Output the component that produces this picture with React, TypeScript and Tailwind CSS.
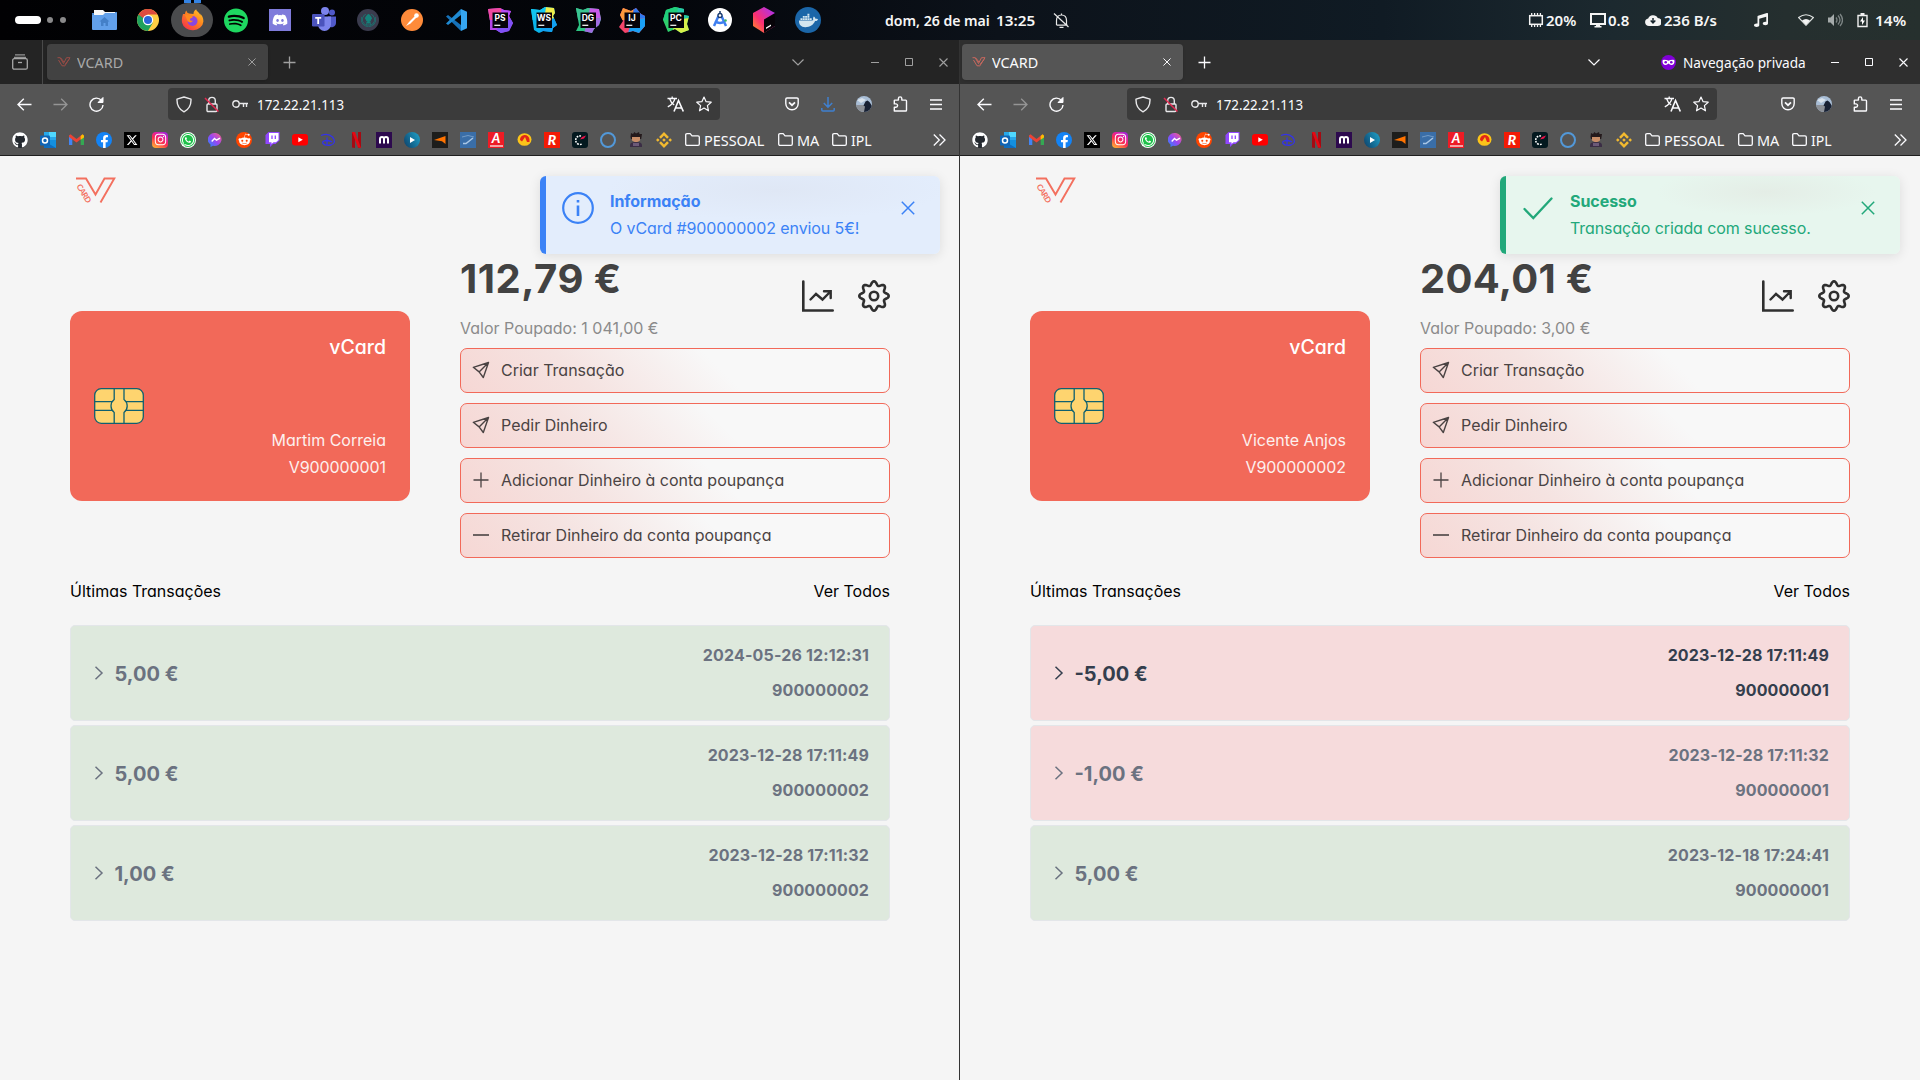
import React from 'react';
import {
  FaSpotify, FaDiscord, FaDocker, FaGithub, FaFacebookF, FaWhatsapp,
  FaRedditAlien, FaInstagram, FaMusic,
} from 'react-icons/fa';
import { FaXTwitter } from 'react-icons/fa6';
import { SiBinance, SiGitkraken } from 'react-icons/si';

type Kids = { children?: React.ReactNode };

/* ---------- system bar ---------- */

function Jb({ label, shape, a, b, c, d }: { label: string; shape: string; a: string; b: string; c: string; d: string }) {
  return (
    <div className="relative h-[26px] w-[26px]">
      <svg className="absolute inset-0" width="26" height="26" viewBox="0 0 26 26">
        <defs><clipPath id={`jb-${label}`}><path d={shape} /></clipPath></defs>
        <g clipPath={`url(#jb-${label})`}>
          <path d="M0 0h26v26H0z" fill={d} />
          <path d="M0 0h15l-2 13H0z" fill={a} />
          <path d="M15 0h11v11L13 13z" fill={b} />
          <path d="M26 11v15H9l4-13z" fill={c} />
        </g>
        <rect x="5.500" y="5.500" width="15.500" height="15.500" fill="#05030a" />
        <rect x="7.300" y="17.700" width="6" height="1.200" fill="#fff" />
      </svg>
      <span className="absolute left-[5px] top-[6px] w-4 text-center font-['Inter'] text-[8.500px] font-bold leading-[11px] text-white">{label}</span>
    </div>
  );
}

function Chrome() {
  return (
    <svg width="22" height="22" viewBox="0 0 22 22">
      <circle cx="11" cy="11" r="11" fill="#ffce44" />
      <path d="M1.500 5.500A11 11 0 0 0 11 22L15.800 13.700 11 11z" fill="#1fa15d" />
      <path d="M1.500 5.500 6.300 13.700 11 11z" fill="#1fa15d" />
      <path d="M1.500 5.500A11 11 0 0 1 20.500 5.500H11L6 9z" fill="#dd4b3e" />
      <circle cx="11" cy="11" r="5.200" fill="#fff" />
      <circle cx="11" cy="11" r="4" fill="#2a66d9" />
    </svg>
  );
}

function Firefox() {
  return (
    <svg width="23" height="23" viewBox="0 0 23 23">
      <defs>
        <linearGradient id="ffx" x1="1" y1="0" x2="0.2" y2="1">
          <stop offset="0" stopColor="#ffd02e" /><stop offset=".45" stopColor="#ff8a1e" /><stop offset="1" stopColor="#f5304b" />
        </linearGradient>
      </defs>
      <path d="M2 5C1 8 .6 11 1 13.500a10.800 9.500 0 0 0 21.400-1C22.500 9 21 6 19 4.500c.5 1 .6 2 .6 2C18 3 15.500 2.500 15.200.3c-2 1.200-2.800 3-2.700 4.700L8 4.500C6.500 4 5.500 3 5.500 1.500 4 3 4 4.500 4 5z" fill="url(#ffx)" />
      <circle cx="11.500" cy="12" r="5" fill="#8a46e0" />
      <path d="M4 6c3-1 5 .5 8 1.500 0 1.500-3 1.300-3 3 0 1 1.500 1.700 3 1-1 2.500-4 2.500-5.500.5z" fill="#ff8a1e" />
    </svg>
  );
}

function Teams() {
  return (
    <svg width="26" height="26" viewBox="0 0 26 26">
      <circle cx="21" cy="5.500" r="3" fill="#5059c9" />
      <circle cx="14" cy="4" r="4" fill="#7b83eb" />
      <path d="M17 9.500h8v6a4.500 4.500 0 0 1-8 3z" fill="#5059c9" />
      <path d="M7 9.500h13v8a6.500 6.500 0 0 1-13 0z" fill="#7b83eb" />
      <rect x="1" y="7" width="12.500" height="12.500" rx="1.200" fill="#4b53bc" />
      <path d="M4.200 10h6v1.700H8.100v5.300H6.300v-5.300H4.200z" fill="#fff" />
    </svg>
  );
}

function VsCode() {
  return (
    <svg width="22" height="22" viewBox="0 0 22 22">
      <path d="M1 7.600 3 6 16 16v6z" fill="#1671b8" />
      <path d="M16 0v6L3 16 1 14.400z" fill="#1f8ad2" />
      <path d="M16 0 22 2.700V19.300L16 22z" fill="#35a5f0" />
    </svg>
  );
}

function Dock({ children, active }: Kids & { active?: boolean }) {
  return (
    <div className="flex h-10 w-11 items-center justify-center">
      {active ? (
        <div className="relative flex h-[34px] w-[42px] items-center justify-center rounded-full bg-[#4a4b4d]">
          <div className="absolute -top-[3px] flex gap-[3px]">
            <i className="h-[3px] w-[7px] bg-[#3584e4]" /><i className="h-[3px] w-[7px] bg-[#3584e4]" />
          </div>
          {children}
        </div>
      ) : children}
    </div>
  );
}

function Ui({ children, w, s = 'scale-x-[0.92]', c = '' }: Kids & { w: string; s?: string; c?: string }) {
  return (
    <span className={`flex shrink-0 whitespace-nowrap ${w} ${c}`}>
      <span className={`inline-block origin-left ${s}`}>{children}</span>
    </span>
  );
}

function SystemBar() {
  return (
    <header className="flex h-10 w-full items-center bg-[linear-gradient(90deg,#010103_0%,#04060b_35%,#0c121a_52%,#101b24_72%,#1c292f_84%,#252f2f_93%,#26302e_100%)] font-['Noto_Sans'] text-[15px] font-semibold leading-5 text-[#f6f6f6]">
      <div className="flex w-[82px] items-center pl-[15px]">
        <i className="h-2 w-[26px] rounded-full bg-white" />
        <i className="ml-1.5 h-1.5 w-1.5 rounded-full bg-[#8a8a8b]" />
        <i className="ml-[7px] h-1.5 w-1.5 rounded-full bg-[#8a8a8b]" />
      </div>
      <Dock>
        <svg width="25" height="20" viewBox="0 0 25 20">
          <path d="M0 3h12l2-1h11v6H0z" fill="#4a88d0" />
          <path d="M2 0h9l2 2h10v6H2z" fill="#f8f8f8" />
          <path d="M0 5h11l2-2h12v16a1 1 0 0 1-1 1H1a1 1 0 0 1-1-1z" fill="#62a0ea" />
          <path d="m12.500 7 5 4.500h-1.500V16h-2.500v-3h-2v3H9v-4.500H7.500z" fill="#4480c8" />
        </svg>
      </Dock>
      <Dock><Chrome /></Dock>
      <Dock active><Firefox /></Dock>
      <Dock>
        <div className="flex h-6 w-6 items-center justify-center rounded-full bg-black"><FaSpotify size={25} color="#1ed760" /></div>
      </Dock>
      <Dock>
        <div className="flex h-[22px] w-[22px] items-center justify-center bg-[#7f7bdb]"><FaDiscord size={16} color="#fff" /></div>
      </Dock>
      <Dock><Teams /></Dock>
      <Dock>
        <div className="flex h-[22px] w-[22px] items-center justify-center rounded-full bg-[#3a3b4d]"><SiGitkraken size={15} color="#14827a" /></div>
      </Dock>
      <Dock>
        <svg width="22" height="22" viewBox="0 0 22 22">
          <circle cx="11" cy="11" r="11" fill="#ff8b3a" />
          <path d="m5 17 3-4 6.500-6.500 1.500 1.500L9.500 14.500z" fill="#fff" />
          <circle cx="15.500" cy="6.500" r="2.300" fill="#fff" />
        </svg>
      </Dock>
      <Dock><VsCode /></Dock>
      <Dock><Jb label="PS" shape="M1 2 13 1 17 3 24 4 22 9 26 16 22 24 14 26 9 23 3 23 3 14z" a="#f04aa0" b="#b74af7" c="#7f52f5" d="#b545e8" /></Dock>
      <Dock><Jb label="WS" shape="M0 2 9 3 14 0 23 1 24 6 22 9 26 18 22 21 21 25 12 24 8 26 3 23z" a="#12c6f0" b="#f0ee4a" c="#12a0f0" d="#0ab4ea" /></Dock>
      <Dock><Jb label="DG" shape="M1 1 8 3 13 1 24 2 26 12 24 18 19 22 17 26 8 24 1 24 4 18z" a="#3ac492" b="#c95aea" c="#a06ce0" d="#2cc482" /></Dock>
      <Dock><Jb label="IJ" shape="M4 1 12 4 17 1 22 7 26 9 26 19 20 26 14 24 6 26 0 20 4 14 1 8z" a="#fa9a3c" b="#2f7af0" c="#1aa0f5" d="#f5446a" /></Dock>
      <Dock><Jb label="PC" shape="M3 3 12 0 21 2 21 8 26 9 24 17 26 23 18 26 12 22 5 25 0 13z" a="#20cf7c" b="#25c8a8" c="#d8f04a" d="#2fcf6c" /></Dock>
      <Dock>
        <svg width="24" height="24" viewBox="0 0 24 24">
          <circle cx="12" cy="12" r="12" fill="#fff" />
          <path d="M6 18 11 7h2l5 11M7 13q5 4 10 0" fill="none" stroke="#3f7ff0" strokeWidth="2.500" />
          <circle cx="12" cy="7.500" r="2" fill="#fff" stroke="#1b3a6b" strokeWidth="1.300" />
          <path d="M12 3v2.500" stroke="#1b3a6b" strokeWidth="1.500" /><circle cx="17.500" cy="12.500" r="1.300" fill="#38b764" />
        </svg>
      </Dock>
      <Dock>
        <svg width="24" height="26" viewBox="0 0 24 26">
          <defs><linearGradient id="tbx" x1="0" y1="1" x2="1" y2="0"><stop offset="0" stopColor="#ff9a1f" /><stop offset=".4" stopColor="#fb2f72" /><stop offset="1" stopColor="#a033ff" /></linearGradient></defs>
          <path d="M12 0 23 6v13L12 26 1 19V6z" fill="url(#tbx)" />
          <path d="M23 6 12 12.500V26l11-7z" fill="#060308" />
          <path d="m14 20.500 5-3v1.500l-5 3z" fill="#fff" />
        </svg>
      </Dock>
      <Dock>
        <div className="flex h-[26px] w-[26px] items-center justify-center rounded-full bg-[#1b66a8]"><FaDocker size={19} color="#d3e6f0" /></div>
      </Dock>
      <div className="ml-[55px] flex items-center">
        <Ui w="w-[79px]" s="scale-x-[0.94]">dom, 26 de</Ui>
        <Ui w="w-[32px]" s="scale-x-[0.94]">mai</Ui>
        <Ui w="w-[57px]" s="scale-x-[1.02]">13:25</Ui>
      </div>
      <svg width="17" height="17" viewBox="0 0 17 17" fill="none" stroke="#e8e8e8" strokeWidth="1.200">
        <path d="M3.500 13.200h11M3.500 13V8.500q0-5.500 5-5.500t5 5.500V13M6.500 15.300h4M8.500 1.500V3M1 1.500l14.500 13.500" />
      </svg>
      <div className="ml-auto flex h-10 items-center pr-3">
        <svg width="16" height="16" viewBox="0 0 16 16" fill="none" stroke="#f4f4f4" strokeWidth="1.500">
          <rect x="1.700" y="3.700" width="12.600" height="8.600" /><path d="M3.700 1v2.500M6.600 1v2.500M9.500 1v2.500M12.400 1v2.500M3.700 12.500V15M6.600 12.500V15M9.500 12.500V15M12.400 12.500V15" strokeWidth="1.300" />
        </svg>
        <Ui w="w-[33px]" s="scale-x-[1]" c="ml-[2px]">20%</Ui>
        <svg className="ml-[11px]" width="16" height="15" viewBox="0 0 16 15"><path d="M1 1h14v10H1z" fill="none" stroke="#f4f4f4" strokeWidth="2" /><path d="M6 11h4v2h1.500v1.500h-7V13H6z" fill="#f4f4f4" /></svg>
        <Ui w="w-[21px]" s="scale-x-[1]" c="ml-[2px]">0.8</Ui>
        <svg className="ml-[16px]" width="16" height="12" viewBox="0 0 16 12"><path d="M4 12a4 3.800 0 0 1-.8-7.500A5 4.500 0 0 1 12.700 4 4 4 0 0 1 12.500 12z" fill="#f4f4f4" /><path d="M8 4v4M5.700 6.500 8 9l2.300-2.500" stroke="#18262e" strokeWidth="1.500" fill="none" /></svg>
        <Ui w="w-[53px]" s="scale-x-[1]" c="ml-[3px]">236 B/s</Ui>
        <FaMusic className="ml-[37px]" size={14} />
        <svg className="ml-[30px]" width="16" height="12" viewBox="0 0 16 12"><path d="M.6 3.500Q8-2 15.400 3.500L8 11.300z" fill="none" stroke="#e0e4e3" strokeWidth="1.100" /><path d="M4 6.500Q8 3.500 12 6.500L8 11z" fill="#f4f4f4" /></svg>
        <svg className="ml-[14px]" width="15" height="14" viewBox="0 0 15 14"><path d="M0 4.500h2.500L6 1v12L2.500 9.500H0z" fill="#a5abab" /><path d="M8 4.500q2 2.500 0 5M10 2.500q4 4.500 0 9M12 1q5 6 0 12" fill="none" stroke="#7d8585" strokeWidth="1.300" /></svg>
        <svg className="ml-[14px]" width="11" height="15" viewBox="0 0 11 15"><path d="M1 2.500h9v11H1z" fill="none" stroke="#f0f0f0" strokeWidth="1.400" /><path d="M3.500 0h4v2h-4z" fill="#f0f0f0" /><path d="M6 4 3 8.500h2V12l3-4.500H6z" fill="#fff" /></svg>
        <Ui w="w-[33px]" s="scale-x-[1.03]" c="ml-[7px]">14%</Ui>
      </div>
    </header>
  );
}

/* ---------- browser chrome ---------- */

const VMark = ({ c }: { c: string }) => (
  <svg width="14" height="10" viewBox="0 0 14 10" fill="none" stroke={c} strokeWidth="1"><path d="M.5.7h2.700l3.300 5.800L9.500.7h3.500L7.500 9.300M1.500 3 5 8.800h2.500M3.500.7 7 5M12 2.500 8 7.500" /></svg>
);

const Cross = ({ c, n = 9 }: { c: string; n?: number }) => (
  <svg width={n} height={n} viewBox="0 0 9 9" stroke={c} strokeWidth="1.100"><path d="M.5.500l8 8M8.500.500l-8 8" /></svg>
);

function WindowButtons({ c, pad }: { c: string; pad: string }) {
  return (
    <div className={`flex items-center ${pad}`}>
      <svg width="8" height="8" viewBox="0 0 8 8"><path d="M0 4.500h8" stroke={c} /></svg>
      <svg className="ml-[26px]" width="8" height="8" viewBox="0 0 8 8"><path d="M.5.500h7v7h-7z" fill="none" stroke={c} /></svg>
      <span className="ml-[26px]"><Cross c={c} /></span>
    </div>
  );
}

function TabStrip({ priv }: { priv?: boolean }) {
  const c = priv ? '#fbfbfe' : '#a0a0a0';
  return (
    <div className={priv ? 'flex h-11 items-center bg-[#2f2f2f] pl-[2px]' : 'flex h-11 items-center bg-[#242424]'}>
      {!priv && (
        <div className="mr-1 flex h-11 w-[43px] items-center border-r border-[#4a4a4a] pl-3">
          <svg width="16" height="16" viewBox="0 0 16 16" fill="none" stroke="#a8a8a8" strokeWidth="1.300"><path d="M3 .8h10M2 3.300h12" opacity=".85" /><rect x=".7" y="4.700" width="14.600" height="10.500" rx="1.500" /><path d="M6 8.500h4" /></svg>
        </div>
      )}
      <div className={priv
        ? 'flex h-9 w-[221px] items-center rounded-[4px] bg-[#555555] pl-[10px] pr-[12px] text-[#fbfbfe] shadow'
        : 'flex h-9 w-[221px] items-center rounded-[4px] bg-[#424242] pl-[10px] pr-[12px] text-[#a9a9a9] shadow'}>
        <VMark c={priv ? '#c9685e' : '#9a4c46'} />
        <Ui w="w-[60px]" s="scale-x-[0.98]" c="ml-[6px]">VCARD</Ui>
        <span className="ml-auto"><Cross c={c} n={8} /></span>
      </div>
      <svg className="ml-[15px]" width="13" height="13" viewBox="0 0 13 13" stroke={c} strokeWidth="1.300"><path d="M6.500.5v12M.5 6.500h12" /></svg>
      <svg className={priv ? 'ml-auto mr-[61px]' : 'ml-auto mr-[67px]'} width="12" height="7" viewBox="0 0 12 7" fill="none" stroke={c} strokeWidth="1.200"><path d="m.5.500 5.500 5.500L11.500.5" /></svg>
      {priv && (
        <>
          <svg width="15" height="15" viewBox="0 0 15 15"><circle cx="7.500" cy="7.500" r="7.500" fill="#8000d7" /><path d="M1.500 6q0-1.300 1.500-1.300 3 0 4.500 1 1.500-1 4.500-1 1.500 0 1.500 1.300 0 4-3.200 4-1.500 0-2.800-1.400Q6.200 10 4.700 10 1.500 10 1.500 6z" fill="#fff" /><circle cx="4.700" cy="7.300" r="1.300" fill="#8000d7" /><circle cx="10.300" cy="7.300" r="1.300" fill="#8000d7" /></svg>
          <Ui w="w-[148px]" s="scale-x-[0.93]" c="ml-[7px] text-[#fbfbfe]">Navegação privada</Ui>
        </>
      )}
      <WindowButtons c={c} pad={priv ? 'pr-[12px]' : 'pr-[11px]'} />
    </div>
  );
}

function Slot({ w, children }: Kids & { w: string }) {
  return <div className={`flex h-10 shrink-0 items-center justify-center ${w}`}>{children}</div>;
}

function Toolbar({ priv }: { priv?: boolean }) {
  const f = '#fbfbfe';
  return (
    <div className={priv ? 'flex h-10 items-center pl-[6px] pr-[6px]' : 'flex h-10 items-center pl-[6px] pr-[5px]'}>
      <Slot w="w-9"><svg width="15" height="13" viewBox="0 0 15 13" fill="none" stroke={f} strokeWidth="1.400"><path d="M14.500 6.500H1M6.800.8 1 6.500l5.800 5.700" /></svg></Slot>
      <Slot w="w-9"><svg width="15" height="13" viewBox="0 0 15 13" fill="none" stroke="#959595" strokeWidth="1.300"><path d="M.5 6.500H14M8.200.8 14 6.500l-5.800 5.700" /></svg></Slot>
      <Slot w="w-9"><svg width="15" height="15" viewBox="0 0 15 15" fill="none" stroke={f} strokeWidth="1.400"><path d="M12.500 3.500A6.500 6.500 0 1 0 14 8" /><path d="M9 5.500h5V.5z" fill={f} strokeWidth="1" /></svg></Slot>
      <div className={priv
        ? 'ml-[53px] mr-[53px] flex h-8 flex-1 items-center rounded-[4px] bg-[#3b3b3b] px-2'
        : 'ml-[54px] mr-[54px] flex h-8 flex-1 items-center rounded-[4px] bg-[#3b3b3b] px-2'}>
        <svg width="16" height="17" viewBox="0 0 16 17" fill="none" stroke="#e8e8ea" strokeWidth="1.400"><path d="M8 1 15 3.200q.3 8.800-7 12.600Q.7 12 1 3.200z" strokeLinejoin="round" /></svg>
        <svg className="ml-3" width="16" height="17" viewBox="0 0 16 17" fill="none" stroke="#e8e8ea" strokeWidth="1.400"><rect x="3" y="8" width="10" height="7.500" rx="1" /><path d="M4.700 8V4.700a3.300 3.300 0 0 1 6.600 0V8" /><path d="m1 2 13.500 13.500" stroke="#e22850" strokeWidth="1.500" /></svg>
        <svg className="ml-3" width="16" height="10" viewBox="0 0 16 10" fill="none" stroke="#e8e8ea" strokeWidth="1.400"><circle cx="4" cy="5" r="3.200" /><path d="M7.200 4.500H16M11.500 4.500V8M14.500 4.500V8" /></svg>
        <Ui w="w-[92px]" s="scale-x-[0.91]" c="ml-[9px] text-[#fbfbfe]">172.22.21.113</Ui>
        <svg className="ml-auto" width="17" height="16" viewBox="0 0 17 16" fill="none" stroke={f} strokeWidth="1.300"><path d="M.5 2.500h9.500M5.200.5v2M8 2.500Q6.500 8 .8 10.800M2.500 2.500Q4 7 7.200 9" /><path d="M7 15.500 11.500 4.500 16.300 15.500M8.700 12h6" strokeWidth="1.600" /></svg>
        <svg className="ml-[12px]" width="16" height="16" viewBox="0 0 16 16" fill="none" stroke={f} strokeWidth="1.200" strokeLinejoin="round"><path d="m8 1 2.100 4.700 5.100.5-3.800 3.400 1.100 5.200L8 12.100l-4.500 2.700 1.100-5.200L.8 6.200l5.100-.5z" /></svg>
      </div>
      <Slot w="w-9"><svg width="14" height="14" viewBox="0 0 14 14" fill="none" stroke={f} strokeWidth="1.400"><path d="M2 1h10a1.200 1.200 0 0 1 1.200 1.200V6.500a6.200 6.200 0 0 1-12.400 0V2.200A1.200 1.200 0 0 1 2 1z" /><path d="m4 5.300 3 2.900 3-2.900" strokeWidth="1.700" /></svg></Slot>
      {!priv && <Slot w="w-9"><svg width="14" height="15" viewBox="0 0 14 15" fill="none" stroke="#3f80d0" strokeWidth="1.500"><path d="M7 0v10M2.800 6 7 10.200 11.200 6M.8 11v2q0 1 1 1h10.400q1 0 1-1v-2" /></svg></Slot>}
      <Slot w="w-9">
        <svg width="16" height="16" viewBox="0 0 16 16"><defs><clipPath id="avc"><circle cx="8" cy="8" r="8" /></clipPath></defs><g clipPath="url(#avc)"><path d="M0 0h16v16H0z" fill="#a9bed6" /><path d="M0 9h9v7H0z" fill="#8c9097" /><path d="M1 4 6 2l4 2-5 3z" fill="#d9e2ec" /><path d="M8 16 9 10.500l-1.500-1L9.500 5.500l2-1 2 1.500L16 10v6z" fill="#172033" /></g></svg>
      </Slot>
      <Slot w="w-9"><svg width="15" height="16" viewBox="0 0 15 16" fill="none" stroke={f} strokeWidth="1.400" strokeLinejoin="round"><path d="M1.300 15V11.300h1.600a1.700 1.700 0 0 0 0-3.400H1.300V4.700q0-.6.600-.6h3.500V2.600a1.700 1.700 0 0 1 3.400 0v1.500h3.900q.8 0 .8.800v9.300q0 .8-.8.800z" /></svg></Slot>
      <Slot w="w-9"><svg width="12" height="11" viewBox="0 0 12 11" stroke={f} strokeWidth="1.300"><path d="M0 1h12M0 5.500h12M0 10h12" /></svg></Slot>
    </div>
  );
}

const Sq = ({ cls, children }: Kids & { cls: string }) => (
  <div className={`flex h-4 w-4 items-center justify-center leading-none ${cls}`}>{children}</div>
);

const Folder = () => (
  <svg width="15" height="13" viewBox="0 0 15 13" fill="none" stroke="#fbfbfe" strokeWidth="1.300" strokeLinejoin="round"><path d="M.7 11V2q0-1.300 1.300-1.300h3.200L7 2.800h6q1.300 0 1.300 1.300V11q0 1.300-1.300 1.300H2Q.7 12.300.7 11z" /></svg>
);

function Bookmarks() {
  const icons = [
    <Sq cls="rounded-full bg-[#24292f]"><FaGithub size={16} color="#fff" /></Sq>,
    <svg width="16" height="16" viewBox="0 0 16 16"><path d="M4 0h12v8H4z" fill="#28a8ea" /><path d="M9 0h7v5H9z" fill="#50d9ff" /><path d="M4 8h12v8H4z" fill="#1490df" /><path d="m4 9 12 7H4z" fill="#0f6cbd" /><rect y="3.500" width="10" height="10" rx="1" fill="#0f64b5" /><circle cx="5" cy="8.500" r="2.500" fill="none" stroke="#fff" strokeWidth="1.500" /></svg>,
    <svg width="15" height="11" viewBox="0 0 15 11"><path d="M0 1.500v9.500h3.300V4z" fill="#4285f4" /><path d="M15 1.500v9.500h-3.300V4z" fill="#34a853" /><path d="M0 1.500 1.500.3 7.500 5l6-4.700V4L7.500 8.500 0 3z" fill="#ea4335" /><path d="M11.700 2 13.500.3 15 1.500V3.500l-3.300 2.300z" fill="#fbbc04" /></svg>,
    <Sq cls="rounded-full bg-[#1383f5]"><FaFacebookF size={13} color="#fff" className="mt-[3px]" /></Sq>,
    <Sq cls="bg-black"><FaXTwitter size={12} color="#fff" /></Sq>,
    <Sq cls="rounded-[4px] bg-[linear-gradient(30deg,#ffc531,#fb2d4f_45%,#e01fa8_70%,#8a2ae8)]"><FaInstagram size={13} color="#fff" /></Sq>,
    <Sq cls="rounded-full bg-white"><div className="flex h-[14px] w-[14px] items-center justify-center rounded-full bg-[#1fc04a]"><FaWhatsapp size={14} color="#fff" /></div></Sq>,
    <svg width="16" height="16" viewBox="0 0 16 16"><defs><linearGradient id="msg" x1="0" y1="1" x2="1" y2="0"><stop offset="0" stopColor="#1d8bff" /><stop offset=".5" stopColor="#9a45f5" /><stop offset="1" stopColor="#ff6378" /></linearGradient></defs><path d="M8 1a7 6.500 0 1 1-3 12.800L2.500 15v-2.500A7 6.500 0 0 1 8 1z" fill="url(#msg)" /><path d="m3.700 9.500 2.800-3 2 1.700 3.500-2" fill="none" stroke="#fff" strokeWidth="1.400" /></svg>,
    <Sq cls="rounded-full bg-[#ff4500]"><FaRedditAlien size={13} color="#fff" /></Sq>,
    <svg width="15" height="15" viewBox="0 0 15 15"><path d="M3.500 0H14.500V8.500L10.500 12H8l-3 3v-3H.5V3z" fill="#9146ff" /><path d="M4 1h9.500v7L11 10.300H8.500L6.500 12v-1.700H4z" fill="#fff" /><path d="M7 3.500v3.500M10.300 3.500v3.500" stroke="#9146ff" strokeWidth="1.300" /></svg>,
    <svg width="16" height="12" viewBox="0 0 16 12"><rect width="16" height="11.500" rx="3" fill="#f00" /><path d="m6.300 3.300 4.500 2.500-4.500 2.500z" fill="#fff" /></svg>,
    <svg width="16" height="14" viewBox="0 0 16 14" fill="none" stroke="#3433e8" strokeWidth="1.300"><path d="M1 2.500Q8-.500 12.500 4 17 10 11 12 5 13 3 10.500 1.500 8 6.500 7.500q4 .2 5.500 1.500M7 4.500v8" /></svg>,
    <svg width="9" height="16" viewBox="0 0 9 16"><path d="M0 0h3v16L0 15.500zM6 0h3v15.500L6 16z" fill="#a50a12" /><path d="M0 0h3l6 16-3-.5z" fill="#e50914" /></svg>,
    <Sq cls="bg-[#2d0a4e]"><svg width="10" height="8" viewBox="0 0 10 8" fill="none" stroke="#fff" strokeWidth="2"><path d="M1 7.500V3q0-2 2-2t2 2v4.500M5 3q0-2 2-2t2 2v4.500" /></svg></Sq>,
    <Sq cls="rounded-full bg-[linear-gradient(60deg,#0d3d66,#1fa5cc)]"><svg width="6" height="6" viewBox="0 0 6 6"><path d="m1 0 5 3-5 3z" fill="#fff" /></svg></Sq>,
    <Sq cls="bg-[#1d1d1b]"><svg width="12" height="8" viewBox="0 0 12 8"><path d="M0 4 11.500 0v8L8 5.200z" fill="#ff7300" /></svg></Sq>,
    <Sq cls="bg-[#3a6ea8]"><svg width="14" height="12" viewBox="0 0 14 12" fill="none" stroke="#a9c7e6"><path d="M1 3Q7 0 13 3" opacity=".5" /><path d="M2 9.500h3L12 4" strokeWidth="1.500" /></svg></Sq>,
    <Sq cls="flex-col bg-[#ee1c25] font-['Lato'] text-[13px] font-black italic text-white"><b className="-mt-[1px] h-[12px] font-black leading-[12px]">A</b><i className="mt-px h-[2px] w-[13px] bg-[#f7a2a5]" /></Sq>,
    <svg width="15" height="13" viewBox="0 0 15 13"><ellipse cx="7.500" cy="6.500" rx="7" ry="6.300" fill="#fcc419" /><path d="M3 7a4.500 4.500 0 0 1 9.500-.5V9H10L8 4 5 8.500z" fill="#e32619" /></svg>,
    <Sq cls="bg-[#f21b05] font-['Lato'] text-[14px] font-black italic text-white">R</Sq>,
    <Sq cls="rounded-[3px] bg-[#04191f]"><svg width="12" height="12" viewBox="0 0 12 12" fill="none"><path d="M7 2a4.300 4.300 0 1 0 1 8" stroke="#fff" strokeWidth="1.500" strokeDasharray="1.800 1" /><path d="M6 5.500 8 3l4-1.500-2 3z" fill="#f0124a" /></svg></Sq>,
    <div className="h-4 w-4 rounded-full border-[2.500px] border-[#5298d8]" />,
    <svg width="14" height="16" viewBox="0 0 14 16"><path d="M1.500 5 2 1l2 1 1.500-2L7 1.500 10 0l.5 2L13 2l-.8 5H2z" fill="#241a1c" /><path d="M3 5h8v3.500Q7 12 3 8.500z" fill="#c98e68" /><path d="M1 13q0-3 6-3t6 3v2H1z" fill="#3b2d45" /><path d="M4 11h6v3H4z" fill="#6c5a78" /></svg>,
    <SiBinance size={16} color="#f3ba2f" />,
  ];
  return (
    <div className="flex h-[31px] items-center pl-[6px] text-[#fbfbfe]">
      {icons.map((ic, i) => <div key={i} className="flex w-7 shrink-0 items-center justify-center">{ic}</div>)}
      <span className="ml-[7px]"><Folder /></span>
      <Ui w="w-[61px]" s="scale-x-[0.985]" c="ml-1">PESSOAL</Ui>
      <span className="ml-[13px]"><Folder /></span>
      <Ui w="w-[21px]" s="scale-x-[0.985]" c="ml-1">MA</Ui>
      <span className="ml-[14px]"><Folder /></span>
      <Ui w="w-[21px]" s="scale-x-[0.96]" c="ml-1">IPL</Ui>
      <svg className="ml-auto mr-[13px]" width="13" height="12" viewBox="0 0 13 12" fill="none" stroke="#fbfbfe" strokeWidth="1.300"><path d="m.8.500 5.500 5.500-5.500 5.500M6.500.500 12 6l-5.500 5.500" /></svg>
    </div>
  );
}

/* ---------- vCard page ---------- */

function Logo() {
  return (
    <svg className="overflow-visible" width="42" height="28" viewBox="0 0 42 28">
      <path d="M1 1.500h10l9.500 16L29.500 1.500h9.800L25.500 25.500" fill="none" stroke="#f3705f" strokeWidth="1.900" />
      <text transform="translate(1.300 9.200) rotate(59)" fontFamily="Lato" fontSize="8" fontWeight="700" fill="#f3705f" textLength="20.500">CARD</text>
    </svg>
  );
}

function Chip() {
  return (
    <svg width="50" height="36" viewBox="0 0 50 36" fill="none" stroke="#0f6070" strokeWidth="1.300">
      <rect x=".7" y=".7" width="48.600" height="34.600" rx="6.500" fill="#fed46f" />
      <path d="M20.200.7v10.800Q17 14 17 18t3.200 6.500v10.800M30 .7v10.800q3.200 2.500 3.200 6.500T30 24.500v10.800M.7 13.700h17.500M.7 22.300h17.500M32 13.700h17.300M32 22.300h17.300" />
    </svg>
  );
}

function gearPath() {
  const pts: string[] = [];
  for (let i = 0; i <= 160; i++) {
    const t = (i / 160) * Math.PI * 2;
    const k = Math.tanh(1.700 * Math.cos(8 * t)) / Math.tanh(1.700);
    const r = 12.800 + 1.900 * k;
    const a = t - 0.042 * Math.sin(16 * t);
    pts.push(`${(16 + r * Math.sin(a)).toFixed(2)} ${(16 - r * Math.cos(a)).toFixed(2)}`);
  }
  return 'M' + pts.join('L') + 'Z';
}
const GEAR = gearPath();

const Send = () => (
  <svg width="18" height="18" viewBox="0 0 18 18" fill="none" stroke="#4a4343" strokeWidth="1.400" strokeLinejoin="round"><path d="M16.500 1.500 1.300 6.300l5.800 4.600 4.200 5.600zM16.500 1.500 7.100 10.900" /></svg>
);
const Plus = () => <svg width="18" height="18" viewBox="0 0 18 18" stroke="#4a4343" strokeWidth="1.300"><path d="M9 1.500v15M1.500 9h15" /></svg>;
const Minus = () => <svg width="18" height="18" viewBox="0 0 18 18" stroke="#4a4343" strokeWidth="1.600"><path d="M1 9h16" /></svg>;

type Tx = { amount: string; date: string; who: string; neg?: boolean; hot?: boolean };
type Account = { name: string; num: string; balance: string; saved: string; balCls: string; txs: Tx[] };

function Action({ icon, children }: Kids & { icon: React.ReactNode }) {
  return (
    <button className="flex h-[45px] w-full items-center rounded-[7px] border border-[#f26959] bg-[linear-gradient(45deg,#f6d7d4_0%,#f5e3e1_28%,#f8f8f8_60%)] pb-[1px] pl-[11px] text-[#4a4343]">
      {icon}<span className="-mt-[1px] ml-[11px]">{children}</span>
    </button>
  );
}

function Row({ amount, date, who, neg, hot }: Tx) {
  return (
    <div className={`flex h-24 items-center justify-between rounded-[5px] border border-[#e3e6e9] pl-[23px] pr-5 font-bold ${neg ? 'bg-[#f6dbdc]' : 'bg-[#dee9dd]'} ${hot ? 'text-[#343e4d]' : 'text-[#6b7280]'}`}>
      <div className="flex items-center">
        <svg width="10" height="14" viewBox="0 0 10 14" fill="none" stroke="currentColor" strokeWidth="1.500"><path d="M1.500.8 8 7l-6.500 6.200" /></svg>
        <span className="ml-[10.500px] mt-[1px] text-[20px]">{amount}</span>
      </div>
      <div className="-mt-[2px] flex flex-col gap-[11px] text-right leading-6">
        <span className="tracking-[0.150px]">{date}</span>
        <span className="tracking-[0.100px]">{who}</span>
      </div>
    </div>
  );
}

function Toast({ ok, title, text }: { ok?: boolean; title: string; text: string }) {
  const c = ok ? '#22a87a' : '#3b82f6';
  return (
    <div className={`absolute top-5 flex h-[78px] w-[400px] rounded-[6px] border-l-[6px] pl-4 shadow-[0_2px_12px_rgba(0,0,0,0.10)] ${ok
      ? 'right-5 border-[#22a87a] bg-[radial-gradient(110px_24px_at_260px_16px,#e4ede6,#e7f6ee)] text-[#22a87a]'
      : 'right-[19px] border-[#3b82f6] bg-[radial-gradient(170px_30px_at_230px_14px,#dfe7f5,#e3edfc)] text-[#3b82f6]'}`}>
      {ok
        ? <svg className="mt-4" width="32" height="32" viewBox="0 0 32 32" fill="none" stroke={c} strokeWidth="2.300" strokeLinecap="round"><path d="m2.500 17 8.800 9L29.500 6.500" /></svg>
        : <svg className="mt-4" width="32" height="32" viewBox="0 0 32 32" fill="none" stroke={c} strokeWidth="2.200"><circle cx="16" cy="16" r="14.800" /><path d="M16 13.500V24M16 8v2.600" strokeWidth="2.600" /></svg>}
      <div className="ml-4 mt-[13px] flex flex-col gap-[3px] leading-6">
        <b className="font-bold tracking-[-0.050px]">{title}</b>
        <span className="whitespace-nowrap tracking-[-0.100px]">{text}</span>
      </div>
      <span className="absolute right-[25px] top-[25px]"><svg width="14" height="14" viewBox="0 0 14 14" stroke={c} strokeWidth="1.500"><path d="m.8.800 12.400 12.400M13.200.8.800 13.200" /></svg></span>
    </div>
  );
}

function Page({ a, toast, pad }: { a: Account; toast: React.ReactNode; pad: string }) {
  return (
    <main className={`relative flex-1 bg-[#f5f5f5] pl-[70px] font-['Inter',sans-serif] text-[16px] text-black [font-feature-settings:'cv11'] ${pad}`}>
      <div className="pl-[5px] pt-[21px]"><Logo /></div>
      <div className="mt-[49px] flex h-[298px] justify-between">
        <div className="mt-[57px] flex h-[190px] w-[340px] flex-col rounded-[12px] bg-[#f26959] pl-6 pr-6 text-right text-white">
          <div className="mt-[22px] text-[19.500px] font-medium leading-7">vCard</div>
          <div className="mt-[27px]"><Chip /></div>
          <div className="mt-[3px] leading-[27px] text-[#fdf0ee]">{a.name}</div>
          <div className="leading-[27px] tracking-[-0.100px] text-[#fdf0ee]">{a.num}</div>
        </div>
        <div className="flex w-[430px] flex-col">
          <div className="flex h-[58px] items-start justify-between">
            <div className={`mt-[1px] text-[40px] font-bold leading-[48px] text-[#424242] ${a.balCls}`}>{a.balance}</div>
            <div className="flex gap-6 pt-[26px]">
              <svg width="32" height="32" viewBox="0 0 32 32" fill="none" stroke="#2f2f2f" strokeWidth="2.600" strokeLinecap="round"><path d="M1.300 1.500V30.500H30.700" /><path d="M8.500 19.500 14 14l6.500 5.500L28 12M22 11.300h6.700V18" strokeWidth="2.400" /></svg>
              <svg width="32" height="32" viewBox="0 0 32 32" fill="none" stroke="#2f2f2f" strokeWidth="2.600" strokeLinejoin="round"><path d={GEAR} /><circle cx="16" cy="16" r="4.200" /></svg>
            </div>
          </div>
          <div className="mb-[8px] mt-[4px] leading-6 text-[#8b8b8b]">{a.saved}</div>
          <div className="flex flex-col gap-[10px]">
            <Action icon={<Send />}>Criar Transação</Action>
            <Action icon={<Send />}>Pedir Dinheiro</Action>
            <Action icon={<Plus />}>Adicionar Dinheiro à conta poupança</Action>
            <Action icon={<Minus />}>Retirar Dinheiro da conta poupança</Action>
          </div>
        </div>
      </div>
      <div className="mt-[27px] flex justify-between leading-6"><span>Últimas Transações</span><span>Ver Todos</span></div>
      <div className="mt-[22px] flex flex-col gap-1">{a.txs.map((t, i) => <Row key={i} {...t} />)}</div>
      {toast}
    </main>
  );
}

function Browser({ priv, children }: Kids & { priv?: boolean }) {
  return (
    <section className={`flex w-[960px] flex-col ${priv ? '' : 'border-r border-[#333]'}`}>
      <div className="font-['Noto_Sans',sans-serif] text-[14.670px] leading-5">
        <TabStrip priv={priv} />
        <div className="border-b border-[#1f1f1f] bg-[#555555]">
          <Toolbar priv={priv} />
          <Bookmarks />
        </div>
      </div>
      {children}
    </section>
  );
}

const left: Account = {
  name: 'Martim Correia', num: 'V900000001', balance: '112,79 €', saved: 'Valor Poupado: 1 041,00 €', balCls: 'tracking-[0.500px]',
  txs: [
    { amount: '5,00 €', date: '2024-05-26 12:12:31', who: '900000002' },
    { amount: '5,00 €', date: '2023-12-28 17:11:49', who: '900000002' },
    { amount: '1,00 €', date: '2023-12-28 17:11:32', who: '900000002' },
  ],
};
const right: Account = {
  name: 'Vicente Anjos', num: 'V900000002', balance: '204,01 €', saved: 'Valor Poupado: 3,00 €', balCls: 'tracking-[0.300px]',
  txs: [
    { amount: '-5,00 €', date: '2023-12-28 17:11:49', who: '900000001', neg: true, hot: true },
    { amount: '-1,00 €', date: '2023-12-28 17:11:32', who: '900000001', neg: true },
    { amount: '5,00 €', date: '2023-12-18 17:24:41', who: '900000001' },
  ],
};

export default function App() {
  return (
    <div className="flex h-[1080px] w-[1920px] flex-col overflow-hidden">
      <SystemBar />
      <div className="flex flex-1">
        <Browser><Page a={left} pad="pr-[69px]" toast={<Toast title="Informação" text="O vCard #900000002 enviou 5€!" />} /></Browser>
        <Browser priv><Page a={right} pad="pr-[70px]" toast={<Toast ok title="Sucesso" text="Transação criada com sucesso." />} /></Browser>
      </div>
    </div>
  );
}
